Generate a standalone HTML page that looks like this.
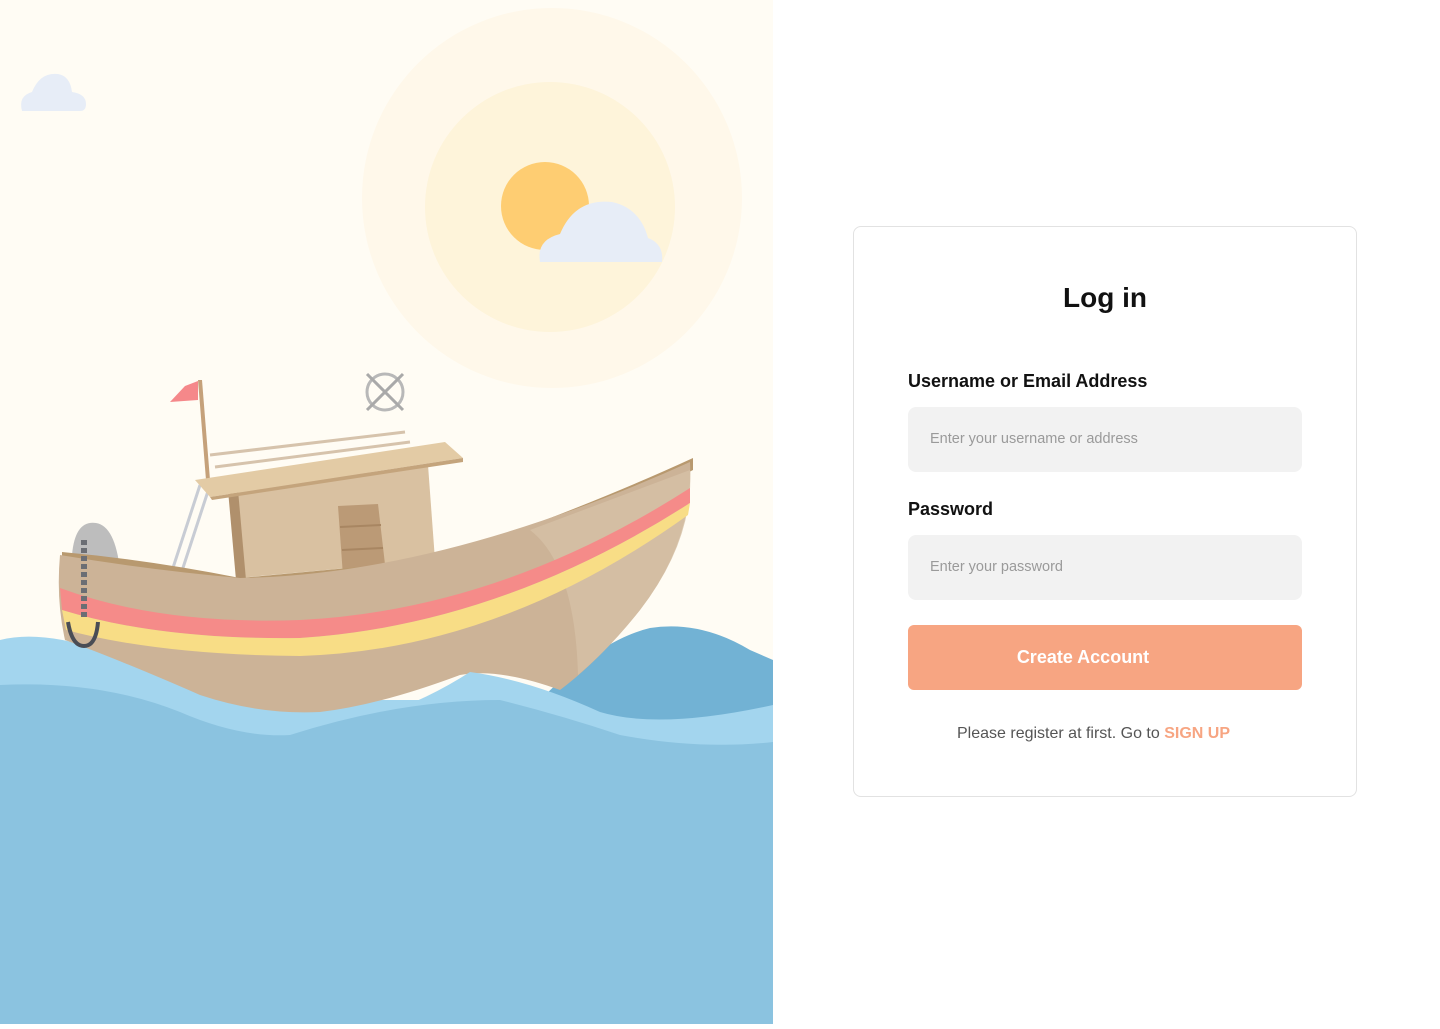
<!DOCTYPE html>
<html><head><meta charset="utf-8"><style>
body{margin:0;width:1440px;height:1024px;background:#fff;font-family:"Liberation Sans",sans-serif;position:relative;overflow:hidden}
#left{position:absolute;left:0;top:0;width:773px;height:1024px;background:#fffcf4}
.card{position:absolute;left:853px;top:226px;width:504px;height:571px;border:1px solid #e2e2e2;border-radius:8px;box-sizing:border-box}
h1{position:absolute;top:282px;margin:0;text-align:center;font-size:28px;font-weight:bold;color:#111}
.lbl{position:absolute;left:908px;font-size:18px;font-weight:bold;color:#111}
.inp{position:absolute;left:908px;width:394px;height:65px;background:#f2f2f2;border-radius:8px;box-sizing:border-box;padding-left:22px;line-height:65px;font-size:14.5px;color:#9a9a9a}
.btn{position:absolute;left:908px;top:625px;width:394px;height:65px;background:#f7a582;border-radius:6px;color:#fff;font-weight:bold;font-size:18px;text-align:center;line-height:65px;box-sizing:border-box;padding-right:44px}
.note{position:absolute;top:725px;font-size:16px;color:#555}
</style></head><body>
<div id="left">
<svg width="773" height="1024" viewBox="0 0 773 1024">
<circle cx="552" cy="198" r="190" fill="#fff8ea"/>
<circle cx="550" cy="207" r="125" fill="#fef4da"/>
<circle cx="545" cy="206" r="44" fill="#fecd72"/>
<path d="M540 262 Q536 240 560 234 Q575 198 612 202 Q640 208 648 238 Q664 244 662 262 Z" fill="#e7edf7"/>
<path d="M22 111 Q18 96 32 92 Q40 72 58 74 Q70 76 72 92 Q86 94 86 104 Q86 111 80 111 Z" fill="#e7edf7"/>
<path d="M0 640 Q40 630 100 650 Q200 690 260 700 L773 700 L773 1024 L0 1024Z" fill="#a3d5ee"/>
<path d="M540 700 Q600 640 650 628 Q700 620 750 650 L773 660 L773 720 L540 720Z" fill="#72b2d4"/>
<path d="M198 380 L202 380 L210 480 L206 480Z" fill="#c5a17a"/>
<path d="M198 381 L185 386 L170 402 L198 400Z" fill="#f5888a"/>
<path d="M170 577 L200 485 M180 577 L210 485" stroke="#c8ccd4" stroke-width="3"/>
<path d="M210 455 L405 432 M215 467 L410 442" stroke="#d6c3ac" stroke-width="3"/>
<path d="M72 555 Q75 520 96 523 Q115 526 120 570 L72 570Z" fill="#bdbdbd"/>
<path d="M228 490 L428 465 L435 560 L238 578Z" fill="#d9c1a1"/>
<path d="M228 490 L238 490 L246 580 L236 580Z" fill="#b0906c"/>
<path d="M338 506 L378 504 L386 573 L343 576Z" fill="#bb9a76"/>
<path d="M340 527 L381 525 M342 550 L383 548" stroke="#a88662" stroke-width="2"/>
<path d="M195 480 L445 442 L463 458 L210 497Z" fill="#e3cba5"/>
<path d="M210 497 L463 458 L463 462 L212 500Z" fill="#c4a47c"/>
<path d="M62 552 Q150 560 240 578 L435 560 Q580 510 693 458 L693 470 Q600 520 420 580 L62 600Z" fill="#b8996f"/>
<path d="M60 555 Q150 570 240 578 Q440 575 690 462 Q694 540 640 610 Q600 660 560 690 Q500 668 460 675 Q380 705 320 712 Q260 715 200 695 Q120 660 65 640 Q56 600 60 555Z" fill="#ccb397"/>
<path d="M530 530 Q575 565 578 675 Q610 648 640 610 Q694 540 690 470 Z" fill="#d6c1a6" opacity="0.8"/>
<path d="M60 588 Q160 625 300 620 Q500 610 690 488 L690 503 Q500 625 300 638 Q160 640 62 610Z" fill="#f58b89"/>
<path d="M62 610 Q160 640 300 638 Q500 625 690 503 L688 515 Q500 650 300 656 Q160 655 66 630Z" fill="#f8dd86"/>
<path d="M84 540 L84 620" stroke="#6b6e74" stroke-width="6" stroke-dasharray="5 3" fill="none"/>
<path d="M68 622 Q72 646 84 646 Q96 646 98 622" stroke="#4a4d55" stroke-width="4" fill="none"/>
<circle cx="385" cy="392" r="18" fill="none" stroke="#b8b8b8" stroke-width="3"/>
<path d="M367 374 L403 410 M403 374 L367 410" stroke="#a9a9a9" stroke-width="3"/>
<path d="M0 685 Q80 680 160 705 Q220 735 270 735 Q380 730 470 672 Q530 680 600 712 Q660 730 773 705 L773 1024 L0 1024Z" fill="#a3d5ee"/>
<path d="M0 685 Q100 680 180 712 Q240 738 290 735 Q400 700 500 700 Q560 715 620 735 Q700 750 773 742 L773 1024 L0 1024Z" fill="#8bc3e0"/>
</svg>
</div>
<div class="card"></div>
<h1 style="left:853px;width:504px">Log in</h1>
<div class="lbl" style="top:371px">Username or Email Address</div>
<div class="inp" style="top:407px">Enter your username or address</div>
<div class="lbl" style="top:499px">Password</div>
<div class="inp" style="top:535px">Enter your password</div>
<div class="btn">Create Account</div>
<div class="note" style="left:957px">Please register at first. Go to <b style="color:#f7a582">SIGN UP</b></div>
</body></html>
